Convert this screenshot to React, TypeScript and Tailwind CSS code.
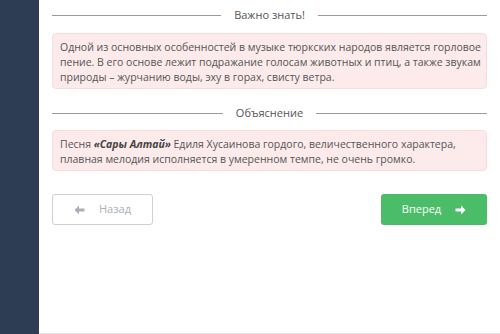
import React from "react";

function Divider({ label }: { label: string }) {
  return (
    <div className="flex items-center h-[18px]">
      <div className="flex-1 h-px bg-[#9a9a9a]" />
      <span className="px-[13px] text-[11px] text-[#555] leading-[18px]">{label}</span>
      <div className="flex-1 h-px bg-[#9a9a9a]" />
    </div>
  );
}

export default function App() {
  return (
    <div
      className="flex w-[500px] h-[334px] bg-white overflow-hidden"
      style={{ fontFamily: '"Open Sans", "Noto Sans", sans-serif' }}
    >
      <div className="w-[39px] h-full bg-[#2c3d54] shrink-0" />
      <div className="flex-1 min-w-0 flex flex-col border-b border-[#e4e4e4]">
        <div className="pl-[13px] pr-[13px] pt-[6px] flex flex-col">
          <Divider label="Важно знать!" />
          <div className="mt-[9px] h-[56px] rounded-[4px] bg-[#fcebea] border border-[#f6dcda] pl-[7px] pt-[6px] text-[10.5px] leading-[15px] text-[#555] whitespace-nowrap overflow-hidden">
            Одной из основных особенностей в музыке тюркских народов является горловое
            <br />
            пение. В его основе лежит подражание голосам животных и птиц, а также звукам
            <br />
            природы – журчанию воды, эху в горах, свисту ветра.
          </div>
          <div className="mt-[15px]">
            <Divider label="Объяснение" />
          </div>
          <div className="mt-[8px] h-[41px] rounded-[4px] bg-[#fcebea] border border-[#f6dcda] pl-[7px] pt-[6px] text-[10.5px] leading-[15px] text-[#555] whitespace-nowrap overflow-hidden">
            Песня <b className="italic font-bold text-[#444]">«Сары Алтай»</b> Едиля Хусаинова гордого, величественного характера,
            <br />
            плавная мелодия исполняется в умеренном темпе, не очень громко.
          </div>
          <div className="mt-[23px] flex justify-between">
            <button className="w-[101px] h-[31px] rounded-[3px] border border-[#d0d0d0] bg-white flex items-center justify-center gap-[14px] text-[11px] text-[#a9b0b8]">
              <svg width="11" height="10" viewBox="0 0 11 10">
                <path d="M5 0.5 L0.5 5 L5 9.5 L5 6.5 L10.5 6.5 L10.5 3.5 L5 3.5 Z" fill="#a9b0b8" />
              </svg>
              <span>Назад</span>
            </button>
            <button className="w-[106px] h-[31px] rounded-[3px] bg-[#4bbd68] flex items-center justify-center gap-[14px] text-[11px] text-white">
              <span>Вперед</span>
              <svg width="11" height="10" viewBox="0 0 11 10">
                <path d="M6 0.5 L10.5 5 L6 9.5 L6 6.5 L0.5 6.5 L0.5 3.5 L6 3.5 Z" fill="#fff" />
              </svg>
            </button>
          </div>
        </div>
      </div>
    </div>
  );
}
